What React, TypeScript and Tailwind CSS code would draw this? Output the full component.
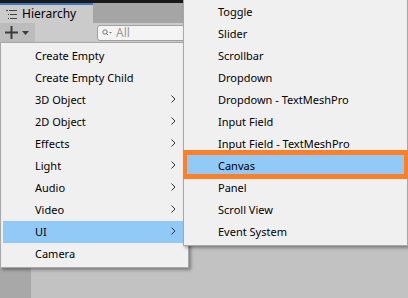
import React from "react";

const mainItems: { label: string; sub?: boolean; active?: boolean }[] = [
  { label: "Create Empty" },
  { label: "Create Empty Child" },
  { label: "3D Object", sub: true },
  { label: "2D Object", sub: true },
  { label: "Effects", sub: true },
  { label: "Light", sub: true },
  { label: "Audio", sub: true },
  { label: "Video", sub: true },
  { label: "UI", sub: true, active: true },
  { label: "Camera" },
];

const subItems: { label: string; active?: boolean }[] = [
  { label: "Toggle" },
  { label: "Slider" },
  { label: "Scrollbar" },
  { label: "Dropdown" },
  { label: "Dropdown - TextMeshPro" },
  { label: "Input Field" },
  { label: "Input Field - TextMeshPro" },
  { label: "Canvas", active: true },
  { label: "Panel" },
  { label: "Scroll View" },
  { label: "Event System" },
];

function Chevron() {
  return (
    <svg width="5" height="8" viewBox="0 0 5 8" className="mr-[10px]">
      <polyline points="0.5,0.5 4,4 0.5,7.5" fill="none" stroke="#333" strokeWidth="1" />
    </svg>
  );
}

export default function App() {
  return (
    <div
      className="relative w-[408px] h-[298px] overflow-hidden flex flex-col text-[11px] text-black"
      style={{ fontFamily: '"Noto Sans", "Open Sans", sans-serif' }}
    >
      {/* top strip */}
      <div className="h-[3px] bg-[#191919]" />
      {/* tab row */}
      <div className="h-[20px] flex">
        <div className="w-[93px] bg-[#cbcbcb] border-t-2 border-[#3a79c0] flex items-center pl-[6px] gap-[5px]">
          <svg width="11" height="9" viewBox="0 0 11 9">
            <rect x="0" y="0" width="2" height="1" fill="#444" />
            <rect x="3" y="0" width="8" height="1" fill="#444" />
            <rect x="2" y="4" width="1" height="1" fill="#444" />
            <rect x="4" y="4" width="7" height="1" fill="#444" />
            <rect x="2" y="8" width="1" height="1" fill="#444" />
            <rect x="4" y="8" width="7" height="1" fill="#444" />
          </svg>
          <span className="text-[12px] leading-none">Hierarchy</span>
        </div>
        <div className="flex-1 bg-[#a5a5a5]" />
      </div>
      {/* toolbar */}
      <div className="h-[20px] flex items-center bg-[#cbcbcb] border-b border-[#999]">
        <div className="w-[35px] h-full bg-[#bcbcbc] flex items-center pl-[5px] gap-[4px]">
          <svg width="13" height="13" viewBox="0 0 13 13">
            <rect x="5.5" y="0" width="2" height="13" fill="#3c3c3c" />
            <rect x="0" y="5.5" width="13" height="2" fill="#3c3c3c" />
          </svg>
          <svg width="7" height="4" viewBox="0 0 7 4">
            <polygon points="0,0 7,0 3.5,4" fill="#3c3c3c" />
          </svg>
        </div>
        <div className="ml-[62px] flex-1 h-[16px] bg-[#f4f4f4] border border-[#a0a0a0] rounded-[3px] flex items-center pl-[4px] gap-[2px]">
          <svg width="10" height="8" viewBox="0 0 10 8">
            <circle cx="3" cy="3" r="2.2" fill="none" stroke="#777" strokeWidth="1" />
            <line x1="4.6" y1="4.6" x2="6.2" y2="6.2" stroke="#777" strokeWidth="1" />
            <polygon points="7,3 10,3 8.5,4.6" fill="#777" />
          </svg>
          <span className="ml-[2px] text-[12px] text-[#999] leading-none">All</span>
        </div>
      </div>
      {/* content */}
      <div className="flex-1 flex">
        <div className="w-[31px] bg-[#a8a8a8]" />
        <div className="flex-1 bg-[#c2c2c2]" />
      </div>

      {/* main context menu */}
      <div className="absolute left-0 top-[42px] w-[189px] bg-[#f0f0f0] border border-[#a8a8a8] px-[2px] py-[2px] shadow-[2px_2px_3px_rgba(0,0,0,0.35)]">
        {mainItems.map((it) => (
          <div
            key={it.label}
            className={`h-[22px] flex items-center justify-between pl-[32px] pb-[2px] ${it.active ? "bg-[#91c9f7]" : ""}`}
          >
            <span className="leading-none">{it.label}</span>
            {it.sub && <Chevron />}
          </div>
        ))}
      </div>

      {/* submenu */}
      <div className="absolute left-[183px] top-[-2px] w-[225px] bg-[#f0f0f0] border border-[#a8a8a8] px-[2px] py-[2px] shadow-[2px_2px_3px_rgba(0,0,0,0.35)]">
        {subItems.map((it) => (
          <div
            key={it.label}
            className={`h-[22px] flex items-center pl-[32px] pb-[2px] ${it.active ? "bg-[#91c9f7]" : ""}`}
          >
            <span className="leading-none">{it.label}</span>
          </div>
        ))}
      </div>

      {/* orange annotation box */}
      <div className="absolute left-[183px] top-[150px] w-[225px] h-[29px] border-x-4 border-y-[5px] border-[#ff7f27]" />
    </div>
  );
}
